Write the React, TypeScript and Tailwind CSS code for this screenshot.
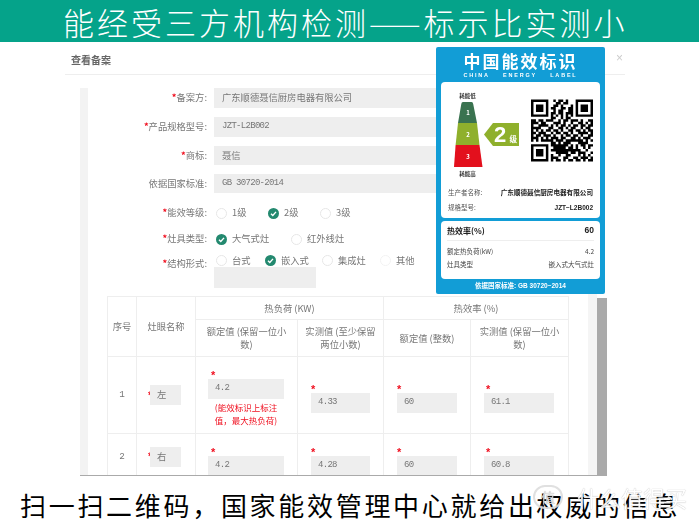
const QR = [
  "1111111001011010001111111",
  "1000001000110110001000001",
  "1011101001101000101011101",
  "1011101011001101101011101",
  "1011101001011001101011101",
  "1000001011011011101000001",
  "1111111010101010101111111",
  "0000000011001011000000000",
  "1101101110010110111010011",
  "1110110001110100100110101",
  "1001111010101101011011011",
  "1111000110011010110010110",
  "1010101101101001101101011",
  "1101110010110110100111101",
  "1011011101001011011010011",
  "1110101011101100110101110",
  "1010111110111011111110101",
  "0000000011010111000111100",
  "1111111011111110101011011",
  "1000001001111101101001010",
  "1011101011111111111100100",
  "1011101000111110110111001",
  "1011101010010011000101010",
  "1000001011100110011011101",
  "1111111010110101101101011",
];

function QrCode() {
  const d = QR.flatMap((row, y) =>
    row.split("").map((c, x) => (c === "1" ? `M${x} ${y}h1v1h-1z` : ""))
  ).join("");
  return (
    <svg viewBox="0 0 25 25" className="w-[63px] h-[63px] mt-[9px]" aria-hidden="true">
      <path d={d} fill="#000" />
    </svg>
  );
}

function Pyramid() {
  return (
    <svg viewBox="441 90 90 88" className="w-[90px] h-[88px] shrink-0" aria-hidden="true">
      <path d="M463 102h8.500q1.500 0 1.700 2L477 123H458l3.300-19q.2-2 1.700-2z" fill="#3a7350" />
      <path d="M458 123H477L479.500 145H455.600z" fill="#8fb02c" />
      <path d="M455.600 145H479.500L482.500 167H454z" fill="#e3101d" />
      <path d="M484 134.500L493 123H519V146H493z" fill="#8fb02c" />
      <text x="467.500" y="97.500" textAnchor="middle" fontSize="5.500" fontWeight="700" fill="#333">耗能低</text>
      <text x="467.500" y="175.500" textAnchor="middle" fontSize="5.500" fontWeight="700" fill="#333">耗能高</text>
      <text x="468" y="115" textAnchor="middle" fontSize="6" fontWeight="700" fill="#fff">1</text>
      <text x="468" y="137" textAnchor="middle" fontSize="6" fontWeight="700" fill="#fff">2</text>
      <text x="468" y="159" textAnchor="middle" fontSize="6" fontWeight="700" fill="#fff">3</text>
      <text x="494" y="142" fontSize="22" fontWeight="700" fill="#fff" fontFamily="'Liberation Sans',sans-serif">2</text>
      <text x="509.500" y="142" fontSize="7.500" fontWeight="700" fill="#fff">级</text>
    </svg>
  );
}

function EnergyLabel() {
  return (
    <div className="absolute left-[436px] top-[47px] w-[169px] h-[247px] rounded-[2px] bg-[#129dd6] flex flex-col items-center blur-[0.3px]">
      <div className="mt-[4px] h-[20px] leading-[20px] text-[17px] font-bold text-white tracking-[2px] whitespace-nowrap">中国能效标识</div>
      <div className="h-[9px] leading-[9px] text-[5.500px] font-bold text-white tracking-[1.800px] whitespace-pre font-['Liberation_Sans',sans-serif]">CHINA    ENERGY    LABEL</div>
      <div className="mt-[2px] w-[159px] h-[136px] rounded-[4px] bg-white flex flex-col px-[7px]">
        <div className="flex -ml-[7px] mt-[8px] h-[88px] items-start">
          <Pyramid />
          <QrCode />
        </div>
        <div className="mt-[10px] flex justify-between items-center h-[10px] text-[6.500px] whitespace-nowrap">
          <span className="text-[#555]">生产者名称:</span>
          <span className="font-bold text-[#222] text-[6.600px]">广东顺德聂信厨房电器有限公司</span>
        </div>
        <div className="mt-[5px] flex justify-between items-center h-[10px] text-[6.500px] whitespace-nowrap">
          <span className="text-[#555]">规格型号:</span>
          <span className="font-bold text-[#222] font-['Liberation_Sans',sans-serif]">JZT−L2B002</span>
        </div>
      </div>
      <div className="mt-[3px] w-[159px] h-[58px] rounded-[4px] bg-white px-[6px] flex flex-col">
        <div className="h-[20px] flex justify-between items-center border-b border-[#eee] text-[8px] font-bold text-[#222] whitespace-nowrap">
          <span>热效率(%)</span>
          <span className="font-['Liberation_Sans',sans-serif] text-[8.500px]">60</span>
        </div>
        <div className="mt-[4px] h-[13px] flex justify-between items-center text-[6.500px] text-[#444] whitespace-nowrap">
          <span>额定热负荷(kW)</span>
          <span>4.2</span>
        </div>
        <div className="h-[13px] flex justify-between items-center text-[6.500px] text-[#444] whitespace-nowrap">
          <span>灶具类型</span>
          <span>嵌入式大气式灶</span>
        </div>
      </div>
      <div className="mt-[1px] h-[12px] leading-[12px] text-[6.500px] font-bold text-white whitespace-nowrap font-['Liberation_Sans','Noto_Sans_CJK_SC',sans-serif]">依据国家标准: GB 30720−2014</div>
    </div>
  );
}

function Star() {
  return <span className="text-[#f01020] font-bold">*</span>;
}

function FieldLabel({ text, req = true }: { text: string; req?: boolean }) {
  return (
    <div className="w-[119px] shrink-0 text-right whitespace-nowrap text-[9.300px] text-[#777]">
      {req && <Star />}
      {text}:
    </div>
  );
}

function InputRow({ label, value, req = true, mono = false, h = 20 }: { label: string; value: string; req?: boolean; mono?: boolean; h?: number }) {
  return (
    <div className={`flex items-center ${h === 19 ? "h-[19px]" : "h-[20px]"}`}>
      <FieldLabel text={label} req={req} />
      <div className={`ml-[7px] w-[300px] h-full bg-[#eee] pl-[8px] flex items-center text-[#777] whitespace-nowrap ${mono ? "font-['Liberation_Mono',monospace] text-[9px] tracking-[-0.700px]" : "text-[9.300px]"}`}>
        {value}
      </div>
    </div>
  );
}

function Radio({ on = false, faint = false }: { on?: boolean; faint?: boolean }) {
  if (on) {
    return (
      <svg viewBox="0 0 11 11" className="w-[11px] h-[11px] shrink-0" aria-hidden="true">
        <circle cx="5.500" cy="5.500" r="5.500" fill="#23896f" />
        <path d="M3 5.700L4.800 7.400L8 3.900" fill="none" stroke="#fff" strokeWidth="1.400" />
      </svg>
    );
  }
  return <span className={`w-[11px] h-[11px] shrink-0 rounded-full border ${faint ? "border-[#f2f2f2]" : "border-[#e6e6e6]"}`} />;
}

function Opt({ label, on, faint, w }: { label: string; on?: boolean; faint?: boolean; w: string }) {
  return (
    <div className={`flex items-center gap-[5px] ${w}`}>
      <Radio on={on} faint={faint} />
      <span className="text-[9.300px] text-[#777] whitespace-nowrap">{label}</span>
    </div>
  );
}

function Cell({ value, w, starClass }: { value: string; w: string; starClass: string }) {
  return (
    <div className="flex flex-col items-start pt-[6px]">
      <span className={`h-[10px] leading-[12px] text-[11px] text-[#f01020] font-bold font-['Liberation_Sans',sans-serif] ${starClass}`}>*</span>
      <div className={`${w} h-[20px] bg-[#eee] pl-[7px] flex items-center text-[#777] font-['Liberation_Mono',monospace] text-[9px] tracking-[-0.700px]`}>{value}</div>
    </div>
  );
}

function NameCell({ value }: { value: string }) {
  return (
    <div className="flex items-center pl-[12px]">
      <span className="w-[1px] text-[#f01020] text-[11px] font-bold -ml-[1px] font-['Liberation_Sans',sans-serif]">*</span>
      <div className="ml-[1px] w-[31px] h-[20px] bg-[#eee] pl-[7px] flex items-center text-[9.300px] text-[#777]">{value}</div>
    </div>
  );
}

const th = "border border-[#eee] font-normal text-[9.300px] leading-[13px] text-[#777] text-center align-middle";
const td = "border border-[#eee] text-[9.300px] text-[#777] align-middle";

function DataTable() {
  return (
    <table className="mt-[8px] ml-[19px] w-[461px] table-fixed border-collapse">
      <colgroup>
        <col className="w-[29px]" />
        <col className="w-[59px]" />
        <col className="w-[102px]" />
        <col className="w-[86px]" />
        <col className="w-[87px]" />
        <col className="w-[98px]" />
      </colgroup>
      <thead>
        <tr className="h-[23px]">
          <th rowSpan={2} className={th}>序号</th>
          <th rowSpan={2} className={th}>灶眼名称</th>
          <th colSpan={2} className={th}>热负荷 (KW)</th>
          <th colSpan={2} className={th}>热效率 (%)</th>
        </tr>
        <tr className="h-[37px]">
          <th className={`${th} px-[10px]`}>额定值 (保留一位小数)</th>
          <th className={`${th} px-[6px]`}>实测值 (至少保留两位小数)</th>
          <th className={th}>额定值 (整数)</th>
          <th className={`${th} px-[6px]`}>实测值 (保留一位小数)</th>
        </tr>
      </thead>
      <tbody>
        <tr className="h-[77px]">
          <td className={`${td} text-center font-['Liberation_Mono',monospace] text-[8px]`}>1</td>
          <td className={td}><NameCell value="左" /></td>
          <td className={`${td} pl-[12px]`}>
            <Cell value="4.2" w="w-[76px]" starClass="ml-[3px]" />
            <div className="mt-[2px] w-[76px] text-[#f01020] text-[8.500px] leading-[13px] text-center whitespace-nowrap">(能效标识上标注<br />值，最大热负荷)</div>
          </td>
          <td className={`${td} pl-[13px]`}><Cell value="4.33" w="w-[59px]" starClass="ml-[0px]" /></td>
          <td className={`${td} pl-[13px]`}><Cell value="60" w="w-[60px]" starClass="ml-[0px]" /></td>
          <td className={`${td} pl-[13px]`}><Cell value="61.1" w="w-[70px]" starClass="ml-[2px]" /></td>
        </tr>
        <tr className="h-[48px]">
          <td className={`${td} text-center font-['Liberation_Mono',monospace] text-[8px] pb-[2px]`}>2</td>
          <td className={`${td} pb-[2px]`}><NameCell value="右" /></td>
          <td className={`${td} pl-[12px]`}><Cell value="4.2" w="w-[76px]" starClass="ml-[3px]" /></td>
          <td className={`${td} pl-[13px]`}><Cell value="4.28" w="w-[59px]" starClass="ml-[0px]" /></td>
          <td className={`${td} pl-[13px]`}><Cell value="60" w="w-[60px]" starClass="ml-[0px]" /></td>
          <td className={`${td} pl-[13px]`}><Cell value="60.8" w="w-[70px]" starClass="ml-[2px]" /></td>
        </tr>
      </tbody>
    </table>
  );
}

export default function App() {
  return (
    <div className="relative w-[699px] h-[523px] overflow-hidden bg-white flex flex-col font-['Noto_Sans_CJK_SC','Noto_Sans_CJK_JP',sans-serif]">
      <header className="h-[42px] shrink-0 bg-[#05a38a] flex items-center pl-[63px] text-white text-[31px] leading-none font-light tracking-[3px] whitespace-nowrap">
        能经受三方机构检测——标示比实测小
      </header>

      <main className="h-[434px] shrink-0 pl-[65px] blur-[0.3px]">
        <div className="w-[560px] h-[33px] border-b border-[#eee] flex items-center justify-between pl-[6px] pr-[2px] pt-[3px]">
          <span className="text-[10px] font-bold text-[#666]">查看备案</span>
          <span className="text-[12px] leading-none text-[#ccc] font-['Liberation_Sans',sans-serif] -mt-[3px]">×</span>
        </div>
        <div className="ml-[15px] mt-[13px] w-[527px] h-[388px] flex overflow-hidden border-b border-[#aaa]">
          <div className="w-[8px] shrink-0 bg-[#f3f3f3]" />
          <div className="flex-1 min-w-0">
            <div className="flex flex-col gap-[9px]">
              <InputRow label="备案方" value="广东顺德聂信厨房电器有限公司" />
              <InputRow label="产品规格型号" value="JZT-L2B002" mono />
              <InputRow label="商标" value="聂信" h={19} />
              <InputRow label="依据国家标准" value="GB 30720-2014" mono req={false} h={19} />
            </div>
            <div className="mt-[12px] h-[16px] flex items-center">
              <FieldLabel text="能效等级" />
              <div className="ml-[9px] flex">
                <Opt label="1级" w="w-[52px]" />
                <Opt label="2级" on w="w-[52px]" />
                <Opt label="3级" w="w-[52px]" />
              </div>
            </div>
            <div className="mt-[10px] h-[16px] flex items-center">
              <FieldLabel text="灶具类型" />
              <div className="ml-[9px] flex">
                <Opt label="大气式灶" on w="w-[75px]" />
                <Opt label="红外线灶" w="w-[75px]" />
              </div>
            </div>
            <div className="mt-[7px] flex items-start">
              <div className="pt-[3px]"><FieldLabel text="结构形式" /></div>
              <div className="ml-[7px] flex flex-col">
                <div className="pl-[2px] flex h-[13px]">
                  <Opt label="台式" w="w-[49px]" />
                  <Opt label="嵌入式" on w="w-[57px]" />
                  <Opt label="集成灶" w="w-[58px]" />
                  <Opt label="其他" faint w="w-[50px]" />
                </div>
                <div className="w-[102px] h-[21px] bg-[#eee]" />
              </div>
            </div>
            <DataTable />
          </div>
          <div className="w-[9px] shrink-0 bg-[#f5f5f5]" />
          <div className="w-[10px] shrink-0 flex flex-col bg-white">
            <div className="mt-[210px] flex-1 bg-[#aaa]" />
          </div>
        </div>
      </main>

      <footer className="flex-1 flex items-center pl-[20px] pt-[10px] text-black text-[26px] leading-none tracking-[2.700px] whitespace-nowrap">
        扫一扫二维码，国家能效管理中心就给出权威的信息
      </footer>

      <EnergyLabel />

      <div className="absolute left-[533px] top-[485px] flex items-center gap-[14px] text-white [text-shadow:0_0_1px_#999] text-[22px] leading-none whitespace-nowrap opacity-90">
        <span className="w-[30px] h-[24px] rounded-full border-2 border-[#ddd] flex items-center justify-center text-[14px] text-[#ddd]">值</span>
        <span>什么值得买</span>
      </div>
    </div>
  );
}
